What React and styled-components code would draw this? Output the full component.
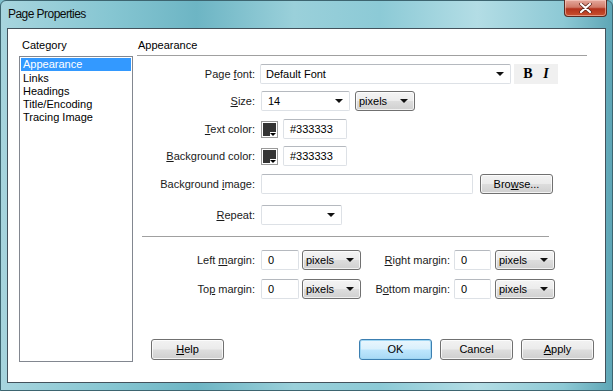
import React from "react";
import styled, { createGlobalStyle } from "styled-components";

const Global = createGlobalStyle`
  html, body {
    margin: 0;
    padding: 0;
    width: 613px;
    height: 391px;
    overflow: hidden;
    background: #7fbfcc;
  }
  * {
    box-sizing: border-box;
  }
`;

const Window = styled.div`
  width: 613px;
  height: 391px;
  display: flex;
  flex-direction: column;
  font-family: "Liberation Sans", Arial, sans-serif;
  font-size: 11px;
  color: #000;
  background: linear-gradient(
    90deg,
    #a7d5de 0%,
    #86c6d2 18%,
    #6db5c4 32%,
    #9ad0da 48%,
    #8ccad6 62%,
    #b3dde5 78%,
    #8dc9d5 92%,
    #5ea6b6 100%
  );
  border: 1px solid #3d6570;
  border-radius: 6px 6px 0 0;
`;

const TitleBar = styled.div`
  height: 27px;
  display: flex;
  justify-content: space-between;
  align-items: flex-start;
  padding-left: 7px;
`;

const Title = styled.div`
  font-size: 12px;
  letter-spacing: -0.55px;
  line-height: 27px;
  color: #0b0b0b;
`;

const CloseButton = styled.div`
  width: 43px;
  height: 17px;
  margin-right: 5px;
  margin-top: -1px;
  border: 1px solid #5a2a22;
  border-top: none;
  border-radius: 0 0 4px 4px;
  background: linear-gradient(180deg, #e4a89c 0%, #d07a68 45%, #b3321c 55%, #c8512f 100%);
  display: flex;
  align-items: center;
  justify-content: center;
  box-shadow: inset 0 0 0 1px rgba(255, 220, 210, 0.5);
`;

const Client = styled.div`
  height: 355px;
  margin: 0 6px;
  background: #fff;
  border: 1px solid #43525c;
  display: flex;
  padding: 10px 0 0 11px;
`;

const CategoryCol = styled.div`
  width: 114px;
  display: flex;
  flex-direction: column;
`;

const Caption = styled.div`
  line-height: 13px;
  padding-left: ${(p) => p.$indent || 0}px;
`;

const ListBox = styled.div`
  margin-top: 4px;
  height: 306px;
  border: 1px solid #828790;
  padding: 1px;
`;

const ListItem = styled.div`
  height: 13px;
  line-height: 13px;
  padding-left: 2px;
  background: ${(p) => (p.$selected ? "#3399ff" : "transparent")};
  color: ${(p) => (p.$selected ? "#fff" : "#000")};
  margin-bottom: ${(p) => (p.$selected ? 1 : 0)}px;
`;

const Panel = styled.div`
  flex: 1;
  margin-left: 4px;
  display: flex;
  flex-direction: column;
  padding-bottom: 22px;
`;

const PanelHeader = styled.div`
  margin-right: 18px;
  padding: 0 0 3px 1px;
  line-height: 13px;
  border-bottom: 1px solid #a0a0a0;
`;

const Row = styled.div`
  display: flex;
  align-items: center;
  height: 20px;
  margin-top: ${(p) => p.$mt}px;
`;

const Label = styled.div`
  width: ${(p) => p.$w || 124}px;
  text-align: right;
  padding-right: ${(p) => p.$pr ?? 6}px;
  flex-shrink: 0;
  white-space: nowrap;
  color: #1a1a1a;
`;

const Key = styled.span`
  text-decoration: underline;
`;

const TextBox = styled.div`
  width: ${(p) => p.$w}px;
  height: 20px;
  margin-left: ${(p) => p.$ml || 0}px;
  border: 1px solid #dde1e6;
  border-top-color: #b5b9bf;
  border-radius: 2px;
  padding-left: ${(p) => p.$pl || 6}px;
  line-height: 18px;
  flex-shrink: 0;
  background: #fff;
`;

const Combo = styled(TextBox)`
  display: flex;
  align-items: center;
  justify-content: space-between;
  padding-right: 6px;
`;

const Arrow = styled.span`
  width: 0;
  height: 0;
  border-left: 4px solid transparent;
  border-right: 4px solid transparent;
  border-top: 4px solid #111;
`;

const ButtonSelect = styled.div`
  width: ${(p) => p.$w}px;
  height: 20px;
  margin-left: ${(p) => p.$ml || 0}px;
  border: 1px solid #707070;
  border-radius: 3px;
  background: linear-gradient(180deg, #f4f4f4 0%, #ececec 48%, #dddddd 52%, #d0d0d0 100%);
  box-shadow: inset 0 0 0 1px rgba(255, 255, 255, 0.7);
  display: flex;
  align-items: center;
  justify-content: space-between;
  padding: 0 6px 0 3px;
  flex-shrink: 0;
`;

const StyleBox = styled.div`
  width: 44px;
  height: 20px;
  margin-left: 3px;
  background: #f0f0f0;
  display: flex;
  align-items: center;
  justify-content: space-around;
  padding: 0 4px;
  font-family: "Liberation Serif", "Times New Roman", serif;
  font-size: 14px;
  font-weight: bold;
`;

const Swatch = styled.div`
  position: relative;
  width: 17px;
  height: 17px;
  flex-shrink: 0;
  border: 1px solid #9a9a9a;
  background: #333;
  box-shadow: inset 0 0 0 1px #fff;
  &::after {
    content: "";
    position: absolute;
    right: 0;
    bottom: 0;
    width: 7px;
    height: 5px;
    background: #fff;
  }
  &::before {
    content: "";
    position: absolute;
    right: 1px;
    bottom: 1px;
    z-index: 1;
    border-left: 3px solid transparent;
    border-right: 3px solid transparent;
    border-top: 3px solid #000;
  }
`;

const Separator = styled.div`
  margin: 11px 56px 0 5px;
  border-top: 1px solid #a0a0a0;
`;

const Buttons = styled.div`
  margin-top: auto;
  display: flex;
  padding: 0 11px 0 14px;
  gap: 8px;
`;

const Button = styled.div`
  width: 73px;
  height: 21px;
  line-height: 19px;
  text-align: center;
  border: 1px solid ${(p) => (p.$default ? "#3c7fb1" : "#707070")};
  border-radius: 3px;
  background: ${(p) =>
    p.$default
      ? "linear-gradient(180deg, #eaf6fd 0%, #d9f0fc 48%, #bee6fd 52%, #a7d9f5 100%)"
      : "linear-gradient(180deg, #f2f2f2 0%, #ebebeb 48%, #dddddd 52%, #cfcfcf 100%)"};
  box-shadow: inset 0 0 0 1px ${(p) => (p.$default ? "#9fd6f3" : "rgba(255,255,255,0.75)")};
  margin-left: ${(p) => (p.$push ? "auto" : "0")};
`;

const SmallButton = styled(Button)`
  height: 20px;
  line-height: 18px;
  margin-left: 7px;
`;

function App() {
  return (
    <>
      <Global />
      <Window>
        <TitleBar>
          <Title>Page Properties</Title>
          <CloseButton>
            <svg width="13" height="10" viewBox="0 0 13 10">
              <path d="M2 1 L11 9 M11 1 L2 9" stroke="#5b2419" strokeWidth="3.6" strokeLinecap="round" />
              <path d="M2 1 L11 9 M11 1 L2 9" stroke="#fff" strokeWidth="2.2" strokeLinecap="round" />
            </svg>
          </CloseButton>
        </TitleBar>
        <Client>
          <CategoryCol>
            <Caption $indent={3}>Category</Caption>
            <ListBox>
              <ListItem $selected>Appearance</ListItem>
              <ListItem>Links</ListItem>
              <ListItem>Headings</ListItem>
              <ListItem>Title/Encoding</ListItem>
              <ListItem>Tracing Image</ListItem>
            </ListBox>
          </CategoryCol>
          <Panel>
            <PanelHeader>Appearance</PanelHeader>
            <Row $mt={8}>
              <Label $w={123} $pr={5}>
                Page <Key>f</Key>ont:
              </Label>
              <Combo $w={251} $pl={5}>
                Default Font
                <Arrow />
              </Combo>
              <StyleBox>
                <span>B</span>
                <span style={{ fontStyle: "italic" }}>I</span>
              </StyleBox>
            </Row>
            <Row $mt={7}>
              <Label>
                <Key>S</Key>ize:
              </Label>
              <Combo $w={89}>
                14
                <Arrow />
              </Combo>
              <ButtonSelect $w={60} $ml={5}>
                pixels
                <Arrow />
              </ButtonSelect>
            </Row>
            <Row $mt={8}>
              <Label>
                <Key>T</Key>ext color:
              </Label>
              <Swatch />
              <TextBox $w={64} $ml={5}>
                #333333
              </TextBox>
            </Row>
            <Row $mt={7}>
              <Label>
                <Key>B</Key>ackground color:
              </Label>
              <Swatch />
              <TextBox $w={64} $ml={5}>
                #333333
              </TextBox>
            </Row>
            <Row $mt={8}>
              <Label>
                Background <Key>i</Key>mage:
              </Label>
              <TextBox $w={212} />
              <SmallButton>
                Bro<Key>w</Key>se...
              </SmallButton>
            </Row>
            <Row $mt={11}>
              <Label>
                <Key>R</Key>epeat:
              </Label>
              <Combo $w={81}>
                <span />
                <Arrow />
              </Combo>
            </Row>
            <Separator />
            <Row $mt={13}>
              <Label>
                Left <Key>m</Key>argin:
              </Label>
              <TextBox $w={38}>0</TextBox>
              <ButtonSelect $w={59} $ml={3}>
                pixels
                <Arrow />
              </ButtonSelect>
              <Label $w={93} $pr={4}>
                <Key>R</Key>ight margin:
              </Label>
              <TextBox $w={37}>0</TextBox>
              <ButtonSelect $w={60} $ml={4}>
                pixels
                <Arrow />
              </ButtonSelect>
            </Row>
            <Row $mt={9}>
              <Label>
                To<Key>p</Key> margin:
              </Label>
              <TextBox $w={38}>0</TextBox>
              <ButtonSelect $w={59} $ml={3}>
                pixels
                <Arrow />
              </ButtonSelect>
              <Label $w={93} $pr={4}>
                B<Key>o</Key>ttom margin:
              </Label>
              <TextBox $w={37}>0</TextBox>
              <ButtonSelect $w={60} $ml={4}>
                pixels
                <Arrow />
              </ButtonSelect>
            </Row>
            <Buttons>
              <Button>
                <Key>H</Key>elp
              </Button>
              <Button $default $push>
                OK
              </Button>
              <Button>Cancel</Button>
              <Button>
                <Key>A</Key>pply
              </Button>
            </Buttons>
          </Panel>
        </Client>
      </Window>
    </>
  );
}

export default App;
